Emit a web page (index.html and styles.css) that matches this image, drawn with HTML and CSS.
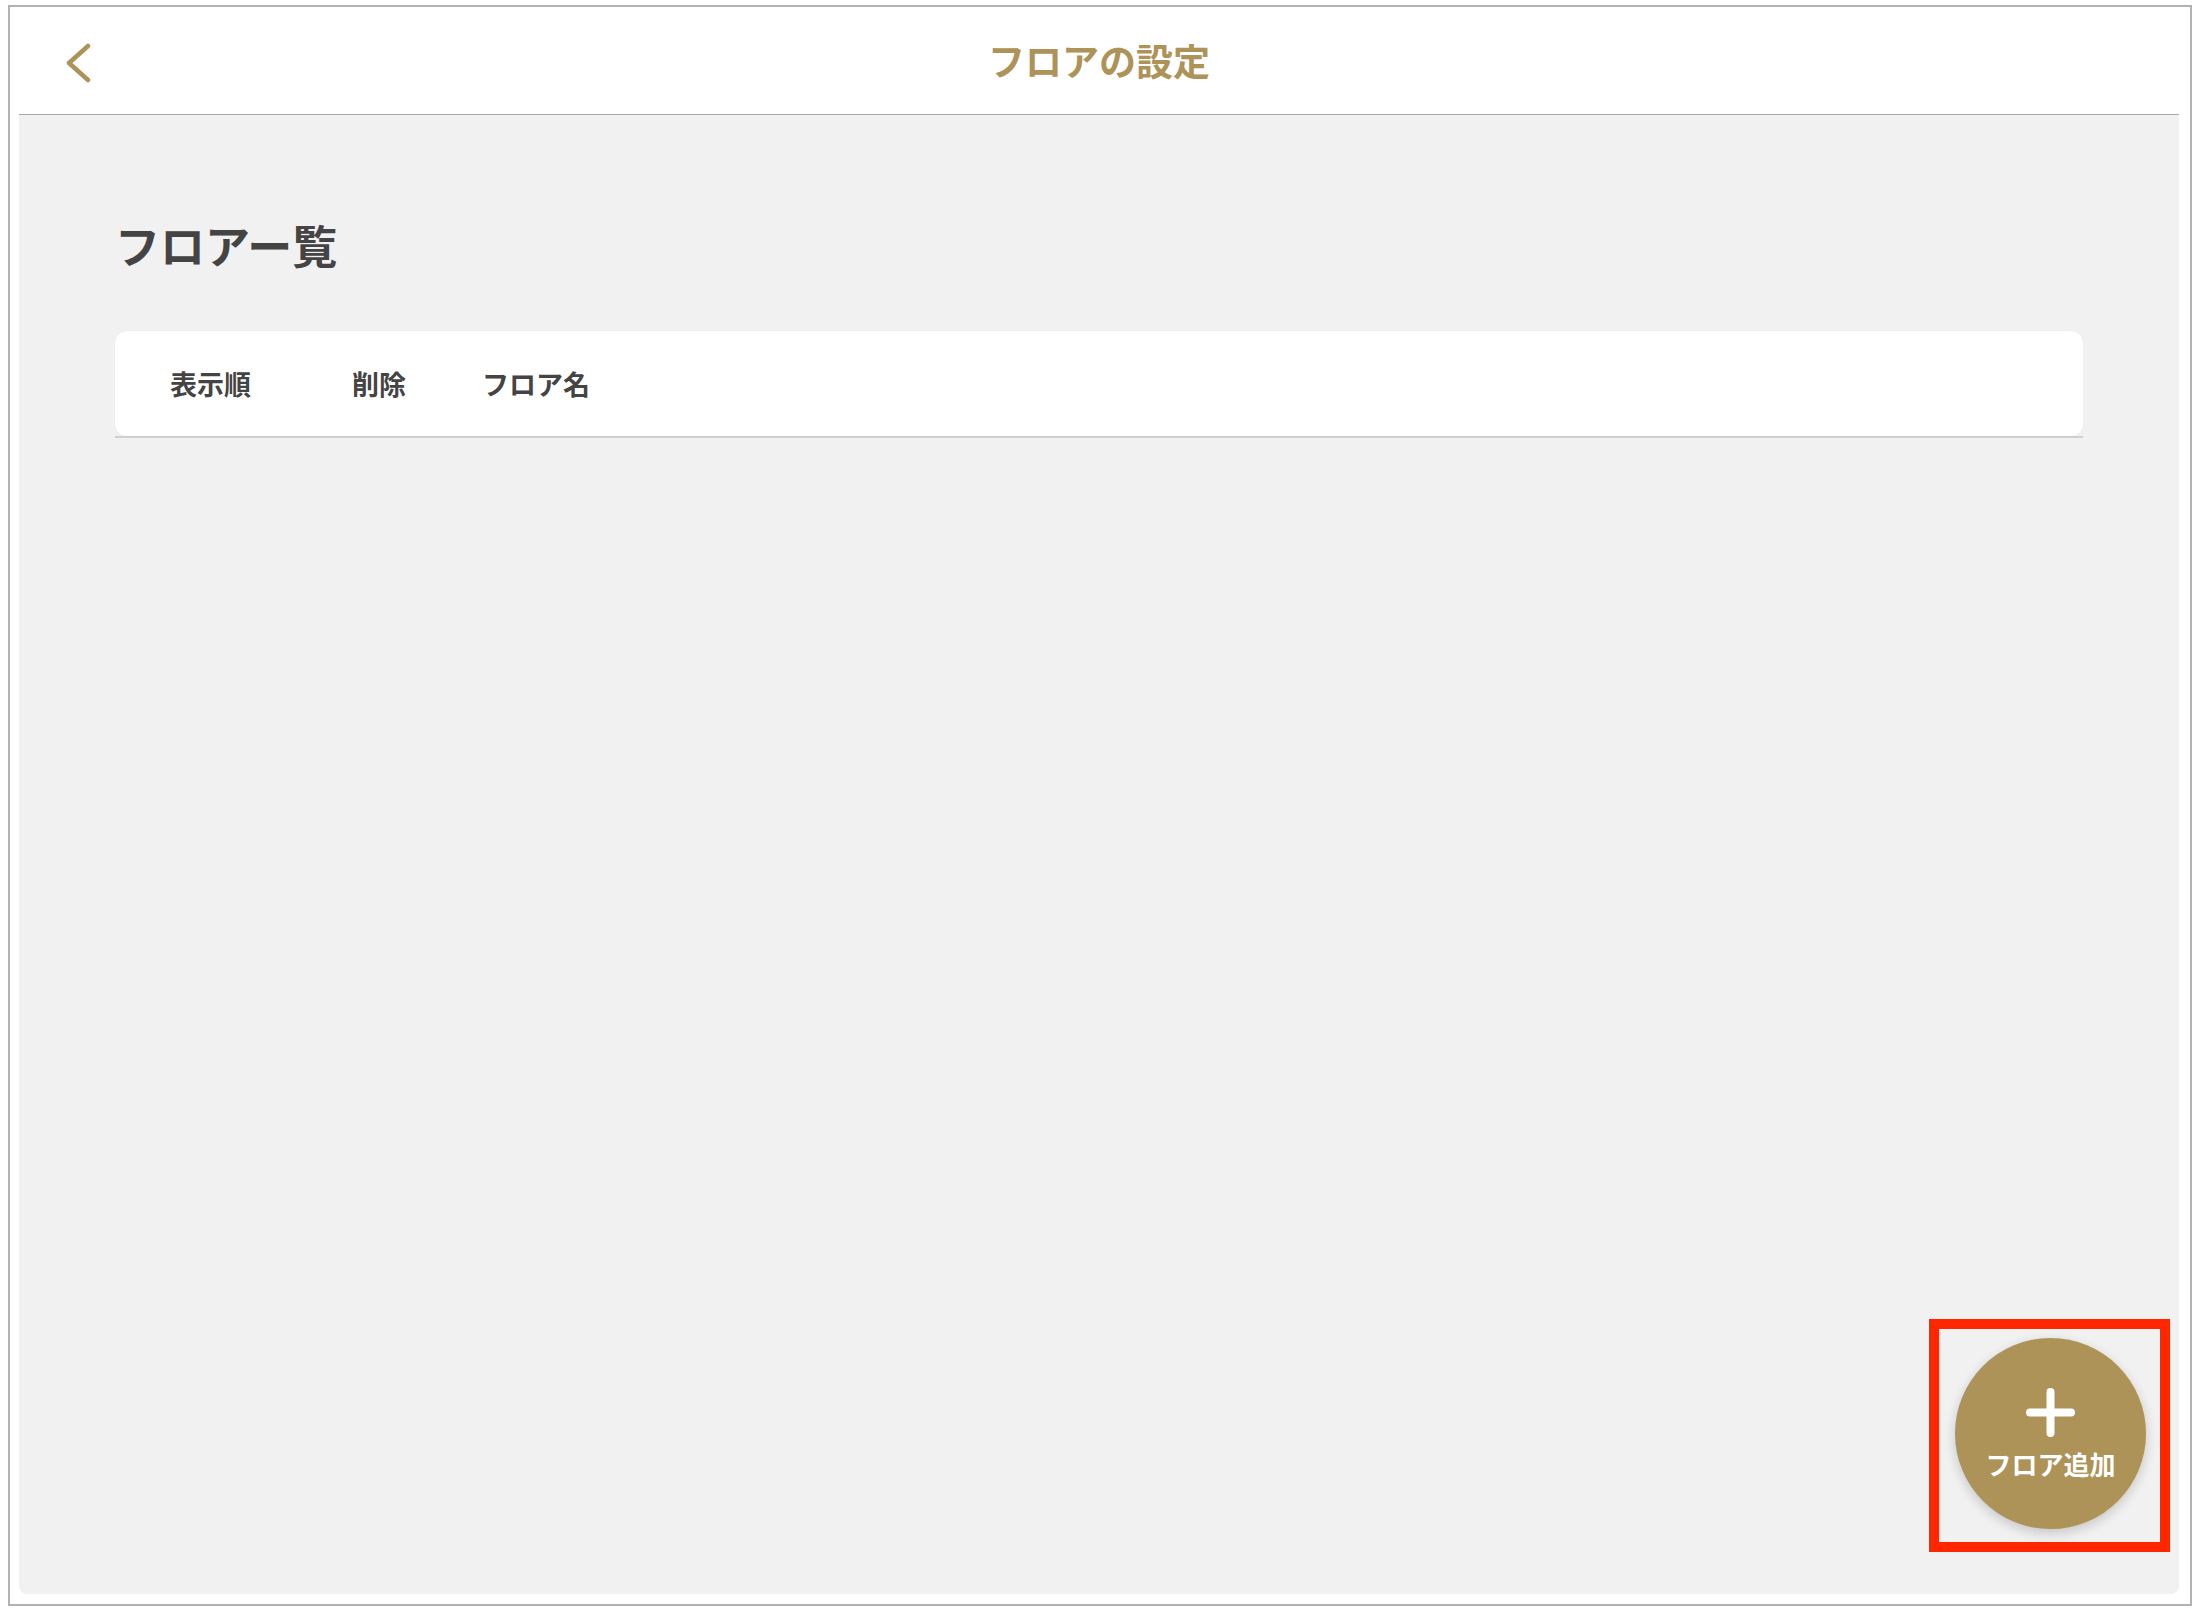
FILE: index.html
```html
<!DOCTYPE html>
<html lang="ja">
<head>
  <meta charset="UTF-8" />
  <meta name="viewport" content="width=device-width, initial-scale=1.0" />
  <title>フロアの設定</title>
  <link rel="stylesheet" href="styles.css">
</head>
<body>

  <div class="frame">
    <header class="topbar">
      <a class="back" href="#" aria-label="戻る">
        <svg width="28" height="40" viewBox="0 0 28 40">
          <polyline points="24,3 5,20 24,37" fill="none" stroke="currentColor" stroke-width="4.5" stroke-linecap="round" stroke-linejoin="round" />
        </svg>
      </a>
      <h1 class="topbar-title">フロアの設定</h1>
      <div></div>
    </header>

    <main class="content">
      <h2 class="section-title">フロアー覧</h2>

      <div class="floor-table">
        <div class="floor-head">
          <span class="col-order">表示順</span>
          <span class="col-delete">削除</span>
          <span class="col-name">フロア名</span>
        </div>
      </div>

      <button class="fab" type="button">
        <svg width="49" height="49" viewBox="0 0 49 49">
          <path d="M24.5 4 V45 M4 24.5 H45" stroke="currentColor" stroke-width="8" stroke-linecap="round" />
        </svg>
        <span>フロア追加</span>
      </button>
      <div class="highlight"></div>
    </main>
  </div>

</body>
</html>
```

FILE: styles.css
```css
* {
  box-sizing: border-box;
}

body {
  margin: 0;
  font-family: "Noto Sans CJK JP", "Noto Sans", sans-serif;
  background-color: #ffffff;
  color: #444;
  height: 100vh;
  overflow: hidden;
}

.frame {
  margin: 5px 6px 6px 8px;
  height: calc(100vh - 11px);
  border: 2px solid #b2b2b2;
  padding: 0 11px 10px 9px;
  display: flex;
  flex-direction: column;
  background-color: #fff;
}

.topbar {
  height: 107px;
  display: grid;
  grid-template-columns: 1fr auto 1fr;
  align-items: center;
  padding: 0 45px;
}

.back {
  color: #ad9357;
  display: flex;
  align-items: center;
  width: 28px;
  height: 40px;
  margin-top: 4px;
}

.topbar-title {
  margin: 0;
  font-size: 37px;
  font-weight: 700;
  color: #ad9357;
  line-height: 1;
  letter-spacing: 0;
}

.content {
  flex: 1;
  position: relative;
  background-color: #f1f1f1;
  border-top: 1px solid #aaaaaa;
  border-radius: 0 0 8px 8px;
  padding: 0 96px;
}

.section-title {
  margin: 98px 0 0;
  font-size: 45px;
  font-weight: 700;
  line-height: 64px;
  color: #444;
}

.floor-table {
  margin-top: 54px;
  border-bottom: 2px solid #d0d0d0;
}

.floor-head {
  height: 105px;
  background-color: #fff;
  border-radius: 12px;
  box-shadow: 0 0 2px rgba(0, 0, 0, 0.06);
  display: grid;
  grid-template-columns: 182px 130px 1fr;
  align-items: center;
  padding-left: 55px;
  padding-bottom: 1px;
  font-size: 27px;
  font-weight: 700;
  color: #444;
}

.fab {
  position: absolute;
  right: 33px;
  bottom: 65px;
  width: 191px;
  height: 191px;
  border: none;
  border-radius: 50%;
  background-color: #ad9358;
  color: #fff;
  box-shadow: 0 4px 12px rgba(0, 0, 0, 0.18);
  display: flex;
  flex-direction: column;
  align-items: center;
  justify-content: center;
  gap: 12px;
  font-family: "Noto Sans CJK JP", "Noto Sans", sans-serif;
  font-size: 26px;
  font-weight: 700;
  line-height: 30px;
  cursor: pointer;
  padding: 0;
  z-index: 2;
}

.fab svg {
  display: block;
}

.highlight {
  position: absolute;
  right: 9px;
  bottom: 42px;
  width: 241px;
  height: 233px;
  border: 10px solid #ff2600;
  z-index: 3;
  pointer-events: none;
}
```
